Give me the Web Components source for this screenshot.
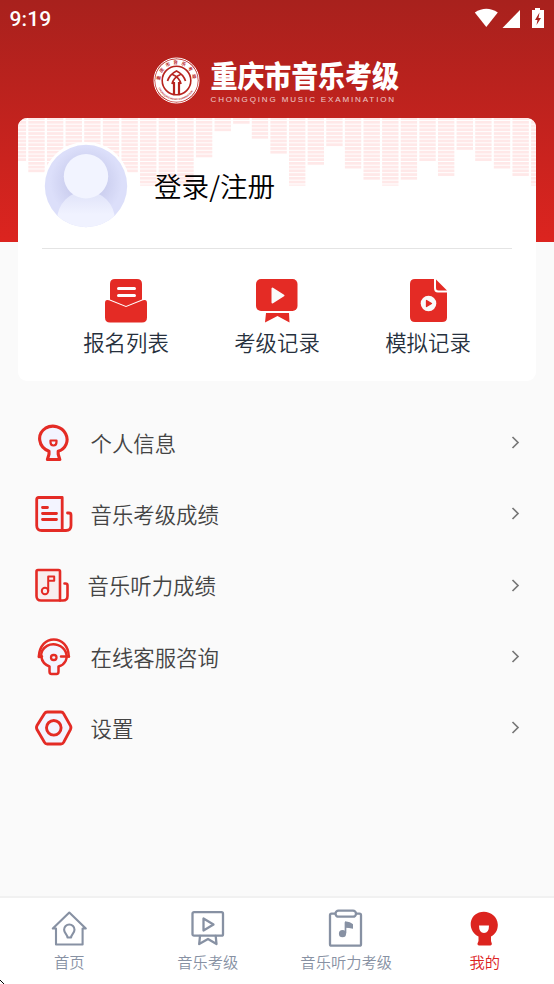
<!DOCTYPE html>
<html lang="zh-CN">
<head>
<meta charset="utf-8">
<title>重庆市音乐考级</title>
<style>
html,body{margin:0;height:100%;overflow:hidden}
body{font-family:"Noto Sans CJK SC","Noto Sans",sans-serif;font-weight:350;background:#fafafa}
</style>
</head>
<body>
<exam-app></exam-app>
<script>
const icons = {
  list: `<svg width="42" height="44" viewBox="0 0 42 44"><path fill="#e42b25" d="M5 20.500V5q0-5 5-5h22q5 0 5 5v15.500L21 27zM4 21.300Q0 20 0 24v14.500q0 5 5 5h32q5 0 5-5V24q0-4-4-2.700L21 28z"/><path d="M13.500 9.500h16M13.500 16.500h16" stroke="#fff" stroke-width="3" stroke-linecap="round"/></svg>`,
  record: `<svg width="42" height="44" viewBox="0 0 42 44"><rect width="41.500" height="32" rx="5" fill="#e42b25"/><path d="M16.500 9.500v14l11-7z" fill="#fafafa" stroke="#fafafa" stroke-width="2" stroke-linejoin="round"/><path d="M10 34h23l.5 9.500L21.500 37 9 43.500z" fill="#e42b25"/></svg>`,
  mock: `<svg width="40" height="44" viewBox="-2 0 40 44"><path fill="#e42b25" d="M5 0h19v9q0 4.500 4 4.500h9v25q0 4.500-5 4.500H5q-5 0-5-5V5q0-5 5-5z"/><path fill="#e42b25" d="M26 .5L37 11.500h-8.500q-2.500 0-2.500-2.500z"/><circle cx="18.500" cy="24.500" r="7.800" fill="#fafafa"/><path d="M16.500 21.500v6l5-3z" fill="#e42b25" stroke="#e42b25" stroke-width="1.300" stroke-linejoin="round"/></svg>`,
  person: `<svg width="38" height="38" viewBox="0 0 38 38" fill="none" stroke="#e42b25" stroke-width="3.100" stroke-linejoin="round" stroke-linecap="round"><path fill="#f3f4ff" d="M14 27.300C3 23 1.500 10 10.500 4.200c7-4.200 16.500-1.700 20 5.300 4 7.500 0 15.500-7.300 17.800v3l1.600 5.200H12.400l1.600-5.200z"/><path d="M15.500 16.500h6v1.500q0 3.500-3 3.500t-3-3.500z" stroke-width="2.200"/></svg>`,
  score: `<svg width="38" height="38" viewBox="0 0 38 38" fill="none" stroke="#e42b25" stroke-width="2.800" stroke-linejoin="round" stroke-linecap="round"><path fill="#f3f4ff" d="M3.700 2.500h23.500v33H6.700q-5 0-5-5v-26q0-2 2-2z"/><path d="M32.500 18h1.500q2 0 2 2v10.500q0 5-5 5h-3.500"/><path d="M7.500 12.500h5M7.500 18.500h14M7.500 24.500h14"/></svg>`,
  listen: `<svg width="35" height="37" viewBox="0 0 35 37" fill="none" stroke="#e42b25" stroke-width="2.600" stroke-linejoin="round" stroke-linecap="round"><path fill="#f8eeee" d="M3 3h20.500q1.500 0 1.500 1.500v29H6q-4.500 0-4.500-4.500V4.500Q1.500 3 3 3z"/><path d="M29.500 16.500h1q2 0 2 2V29q0 4.500-4.500 4.500h-3"/><circle cx="10" cy="24" r="3.200" stroke-width="2"/><path d="M13.200 24V9.500h6v4.200h-5.500" stroke-width="2"/></svg>`,
  service: `<svg width="38" height="38" viewBox="0 0 38 38" fill="none" stroke="#e42b25" stroke-width="2.500" stroke-linejoin="round" stroke-linecap="round"><path d="M3.800 18.500C4.500 7.500 11 1.500 18.800 1.500s14.700 6 15 17"/><path fill="#f3f4ff" d="M14.500 28.500C5 25 3 13 12 7.800c7-3.500 16-.5 18.700 6.200 2.800 7-1 12.800-7.200 14.500v5q0 2.500-2 2.500h-5q-2 0-2-2.500z"/><path d="M4 19l3-.5M34 18.500h-8"/><rect x="16" y="17" width="5.500" height="5" rx="2.500" stroke-width="2.300"/></svg>`,
  settings: `<svg width="38" height="36" viewBox="0 0 38 36" fill="none" stroke="#e42b25" stroke-width="2.900" stroke-linejoin="round"><path fill="#f3f4ff" d="M12.200 2h13.700q1.800 0 2.700 1.600l6.800 12q1 2 0 4l-6.800 12.800q-.9 1.600-2.700 1.600H12.200q-1.800 0-2.700-1.600L2 19.600q-1-2 0-4l7.500-12Q10.400 2 12.200 2z"/><circle cx="18.800" cy="17.800" r="7.300"/></svg>`,
  home: `<svg width="36" height="36" viewBox="0 0 36 36" fill="none" stroke="#8791a3" stroke-width="2.100" stroke-linejoin="round" stroke-linecap="round"><path d="M18.300 1.500L1.800 17.500H5V33.500h26.600V17.500h3.200z"/><path d="M16.500 26.500c0-3-3.400-4.500-3.400-7.800a5.200 5.200 0 0 1 10.400 0c0 3.300-3.400 4.800-3.400 7.800z"/></svg>`,
  exam: `<svg width="36" height="36" viewBox="0 0 36 36" fill="none" stroke="#8791a3" stroke-width="2.300" stroke-linejoin="round" stroke-linecap="round"><rect x="2.500" y="1.200" width="30.500" height="23.500" rx="1.500"/><path d="M13.500 7.500v12l10-6zM10 25l-.8 8 8.800-5 8.500 5-.8-8"/></svg>`,
  audio: `<svg width="36" height="40" viewBox="0 .8 36 40" fill="none" stroke="#8791a3" stroke-width="2.300"><path d="M8 5.500H3.500Q2 5.500 2 7v29q0 1.500 1.500 1.500h28q1.500 0 1.500-1.500V7q0-1.500-1.500-1.500H27"/><rect x="7.500" y="2.500" width="20.500" height="6" rx="3"/><circle cx="14.500" cy="25.500" r="3.600" fill="#8791a3" stroke="none"/><path d="M17.500 25V14" stroke-width="1.700"/><path d="M17 13q5.500.5 8 3v4.500q-4-1-8-1z" fill="#8791a3" stroke="none"/></svg>`,
  me: `<svg width="29" height="36" viewBox="0 0 29 36"><path fill="#dc241f" d="M8.500 25.500C-2 20.500-2 5.500 9 1.500c8-3 18.500 2 18.800 12 .2 6-3 10-6.800 12v4.500l.8 2.500q.3 2-1.500 2H9q-1.800 0-1.500-2l1-2.500z"/><path fill="#fff" d="M9 14.500h10q0 7.500-5 7.500t-5-7.500z"/></svg>`
};
function define(name, css, html) {
  customElements.define(name, class extends HTMLElement {
    constructor() {
      super();
      const root = this.attachShadow({ mode: "open" });
      root.innerHTML = `<style>*{box-sizing:border-box}svg{display:block;flex:none}${css}</style>${typeof html === "function" ? html(this) : html}`;
    }
  });
}

define("status-bar",
  `:host{display:flex;justify-content:space-between;align-items:flex-start;height:50px;padding:8px 9px 0 9.500px;color:#fff;font:500 21px/23px Roboto,sans-serif;letter-spacing:.1px}`,
  `<span>9:19</span><svg width="71" height="22" viewBox="0 0 71 22" fill="#fff"><path d="M.8 4.500Q12.300-3 23.800 4.500L12.300 19z"/><path d="M46 2v18H28.500z"/><path d="M61 0h5v2h4v18H58V2h3z"/><path fill="#a8211d" d="M65.500 4.500L61 12h2.500l-1 5 4.500-7h-2.500z"/></svg>`);

define("brand-logo",
  `:host{display:flex;justify-content:center;gap:10.500px;height:68px;padding:7px 2.500px 0 0;color:#fff}
   .words{width:188px;padding-top:0}
   .name{font:900 27px/35px "Noto Sans CJK SC",sans-serif;white-space:nowrap;letter-spacing:-.1px;transform:scaleY(1.1)}
   .en{font:400 8px/11px "Liberation Sans",sans-serif;white-space:nowrap;letter-spacing:1.870px;opacity:.75;margin-top:2px}`,
  `<svg width="47" height="47" viewBox="0 0 47 47"><circle cx="23.500" cy="23.500" r="22.500" fill="none" stroke="#fff"/><circle cx="23.500" cy="23.500" r="21.300" fill="#fff"/><circle cx="23.500" cy="23.500" r="14.300" fill="none" stroke="#b7231e" stroke-width="1.600"/>
   <path d="M14.500 24q2-6.500 9-10 7 3.500 9 10M19.500 17.500q7 3 8.500 9.500M27.500 17.500q-7 3-8.500 9.500" fill="none" stroke="#b7231e" stroke-width="1.700"/><path d="M21 37.500V25M26 37.500V25" stroke="#b7231e" stroke-width="2.200"/>
   <defs><path id="up" d="M7.100 23.500A16.400 16.400 0 1 1 39.900 23.500"/><path id="down" d="M5.400 31A19.600 19.600 0 0 0 41.600 31"/></defs>
   <text font-family="Noto Sans CJK SC" font-weight="700" font-size="4.500" fill="#b7231e" letter-spacing="3"><textPath href="#up">重庆市音乐考级</textPath></text>
   <text font-family="Liberation Sans" font-weight="700" font-size="2.500" fill="#b7231e"><textPath href="#down">CHONGQING MUSIC EXAMINATION</textPath></text></svg>
   <div class="words"><div class="name">重庆市音乐考级</div><div class="en">CHONGQING MUSIC EXAMINATION</div></div>`);

define("equalizer-art",
  `:host{display:block;height:70px}`,
  () => {
    const ends = [161,172,172,172,172,172,172,186,186,186,157,131,123.7,138.7,153.7,186,165,146,168.7,179.7,186,179.7,161,176,150,161,168.7,176,186];
    let bars = "";
    ends.forEach((end, i) => {
      const x = 9.7 + i * 18.62 - 18;
      for (let k = -1; k < 17; k++) {
        const bottom = 123.7 + k * 3.73;
        if (bottom <= end + 1) bars += `<rect x="${x.toFixed(2)}" y="${(bottom - 2.75 - 118).toFixed(2)}" width="16.4" height="2.75"/>`;
      }
      if (end === 186) bars += `<rect x="${x.toFixed(2)}" y="66.3" width="16.4" height="1.7" opacity=".7"/>`;
    });
    return `<svg width="518" height="70" fill="#ffe8e8">${bars}</svg>`;
  });

define("user-avatar",
  `:host{display:block;width:88px;height:88px}`,
  `<svg width="88" height="88" viewBox="0 0 88 88"><defs><radialGradient id="g" gradientUnits="userSpaceOnUse" cx="44" cy="40" r="36"><stop offset=".55" stop-color="#cdd0f0"/><stop offset="1" stop-color="#dcdffa"/></radialGradient><linearGradient id="b" x2="0" y2="1"><stop offset=".1" stop-color="#e3e6fa"/><stop offset=".4" stop-color="#f0f2ff"/></linearGradient><clipPath id="c"><circle cx="44" cy="44" r="41.200"/></clipPath></defs><circle cx="44" cy="44" r="44" fill="#fff"/><g clip-path="url(#c)"><circle cx="44" cy="44" r="42" fill="url(#g)"/><circle cx="44" cy="78" r="29" fill="url(#b)"/><circle cx="44" cy="34.300" r="22.200" fill="#f2f4ff"/></g></svg>`);

define("quick-action",
  `:host{display:flex;flex-direction:column;align-items:center;width:151px;color:#26303d;font-size:21.400px;line-height:32px}
   .icon{height:47px}`,
  el => `<div class="icon">${icons[el.getAttribute("icon")]}</div><slot></slot>`);

define("profile-card",
  `:host{display:grid;height:263px;margin:0 18px;background:#fff;border-radius:9px;overflow:hidden}
   equalizer-art,.body{grid-area:1/1}
   .body{display:flex;flex-direction:column}
   .login{display:flex;align-items:center;gap:24px;height:131px;margin:0 24px;padding:5px 0 0 0;border-bottom:1px solid #e4e4e4;color:#000;font-size:27.600px;line-height:40px}
   .login span{padding-bottom:1px}
   .actions{display:flex;padding:30px 0 0 32.500px}`,
  `<equalizer-art></equalizer-art><div class="body"><div class="login"><user-avatar></user-avatar><span>登录/注册</span></div>
   <div class="actions"><quick-action icon="list">报名列表</quick-action><quick-action icon="record">考级记录</quick-action><quick-action icon="mock">模拟记录</quick-action></div></div>`);

define("menu-row",
  `:host{display:flex;align-items:center;height:71.300px;padding:0 34px 0 35px;color:#444;font-size:21.400px;line-height:32px}
   .label{flex:1;padding-left:17.500px}`,
  el => `${icons[el.getAttribute("icon")]}<span class="label"><slot></slot></span><svg width="9" height="13" viewBox="0 0 9 13" fill="none" stroke="#777" stroke-width="1.700"><path d="M1.500 1l5.500 5.500L1.500 12"/></svg>`);

define("tab-item",
  `:host{display:flex;flex:1;flex-direction:column;align-items:center;color:#8791a3;font-size:15.300px;line-height:22px}
   :host([active]){color:#dc241f}
   .icon{display:flex;align-items:center;height:40px;margin-bottom:1px}`,
  el => `<div class="icon">${icons[el.getAttribute("icon")]}</div><slot></slot>`);

define("tab-bar",
  `:host{display:flex;height:88px;padding-top:11px;background:#fff;border-top:2px solid #f1f1f1}
   .cursor{position:absolute;left:0;bottom:0}`,
  `<tab-item icon="home">首页</tab-item><tab-item icon="exam">音乐考级</tab-item><tab-item icon="audio">音乐听力考级</tab-item><tab-item icon="me" active>我的</tab-item>
   <svg class="cursor" width="4" height="4" viewBox="0 0 4 4"><path d="M0 0h1v1H0zM1 1h1v1H1zM2 2h1v1H2zM3 3h1v1H3z"/></svg>`);

define("exam-app",
  `:host{display:flex;flex-direction:column;width:554px;height:984px;background:linear-gradient(#a8211d,#dc241f) 0 0/100% 242px no-repeat #fafafa}
   main{flex:1;padding-top:26px}`,
  `<status-bar></status-bar><brand-logo></brand-logo><profile-card></profile-card>
   <main><menu-row icon="person">个人信息</menu-row><menu-row icon="score">音乐考级成绩</menu-row><menu-row icon="listen">音乐听力成绩</menu-row><menu-row icon="service">在线客服咨询</menu-row><menu-row icon="settings">设置</menu-row></main>
   <tab-bar></tab-bar>`);
</script>
</body>
</html>
